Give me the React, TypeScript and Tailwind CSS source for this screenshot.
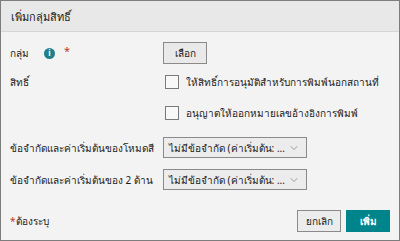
import { ChevronDown } from "lucide-react";

const font = { fontFamily: '"Noto Sans", Tahoma, sans-serif' };

function Check({ label }: { label: string }) {
  return (
    <label className="flex h-[13px] items-center gap-[7px]">
      <span className="h-[14px] w-[14px] shrink-0 border border-[#7a7a7a] bg-[#f8f8f8]" />
      <span className="whitespace-nowrap">{label}</span>
    </label>
  );
}

function Select() {
  return (
    <div className="flex h-[21px] w-[144px] shrink-0 items-center justify-between border border-[#8a8a8a] bg-[#ececec] pl-[5px] pr-[6px]">
      <span className="whitespace-nowrap">ไม่มีข้อจำกัด (ค่าเริ่มต้น: ...</span>
      <ChevronDown size={12} strokeWidth={1.2} className="text-[#666]" />
    </div>
  );
}

export default function App() {
  return (
    <div
      className="flex h-[241px] w-[400px] flex-col overflow-hidden border border-[#7d7d7d] bg-[#f3f3f3] text-[10px] leading-none text-[#1a1a1a]"
      style={font}
    >
      <div className="flex h-[31px] shrink-0 items-center border-b border-[#d6d6d6] bg-[#e8e8e8] pl-[10px] text-[11px]">
        เพิ่มกลุ่มสิทธิ์
      </div>

      <div className="flex flex-1 flex-col pl-[9px] pr-[9px] pt-[10px]">
        <div className="flex h-[22px] items-center">
          <div className="flex w-[153px] shrink-0 items-center">
            <span>กลุ่ม</span>
            <span className="ml-[15px] flex h-[11px] w-[11px] items-center justify-center rounded-full bg-[#1f7f8c] text-[8px] font-bold text-white">
              i
            </span>
            <span className="ml-[9px] -mt-[5px] text-[11px] text-[#c0392b]">*</span>
          </div>
          <button className="h-[22px] w-[44px] border border-[#8a8a8a] bg-[#e9e9e9] text-[10px]">
            เลือก
          </button>
        </div>

        <div className="mt-[11px] flex items-center">
          <div className="w-[155px] shrink-0">สิทธิ์</div>
          <Check label="ให้สิทธิ์การอนุมัติสำหรับการพิมพ์นอกสถานที่" />
        </div>

        <div className="mt-[18px] flex items-center">
          <div className="w-[155px] shrink-0" />
          <Check label="อนุญาตให้ออกหมายเลขอ้างอิงการพิมพ์" />
        </div>

        <div className="mt-[18px] flex items-center">
          <div className="w-[153px] shrink-0 whitespace-nowrap">ข้อจำกัดและค่าเริ่มต้นของโหมดสี</div>
          <Select />
        </div>

        <div className="mt-[11px] flex items-center">
          <div className="w-[153px] shrink-0 whitespace-nowrap">ข้อจำกัดและค่าเริ่มต้นของ 2 ด้าน</div>
          <Select />
        </div>

        <div className="mt-[20px] flex items-center">
          <div className="flex-1">
            <span className="text-[#c0392b]">*</span>ต้องระบุ
          </div>
          <button className="h-[22px] w-[44px] border border-[#8a8a8a] bg-[#ececec]">ยกเลิก</button>
          <button className="ml-[5px] h-[22px] w-[44px] bg-[#00848c] font-bold text-white">เพิ่ม</button>
        </div>
      </div>
    </div>
  );
}
